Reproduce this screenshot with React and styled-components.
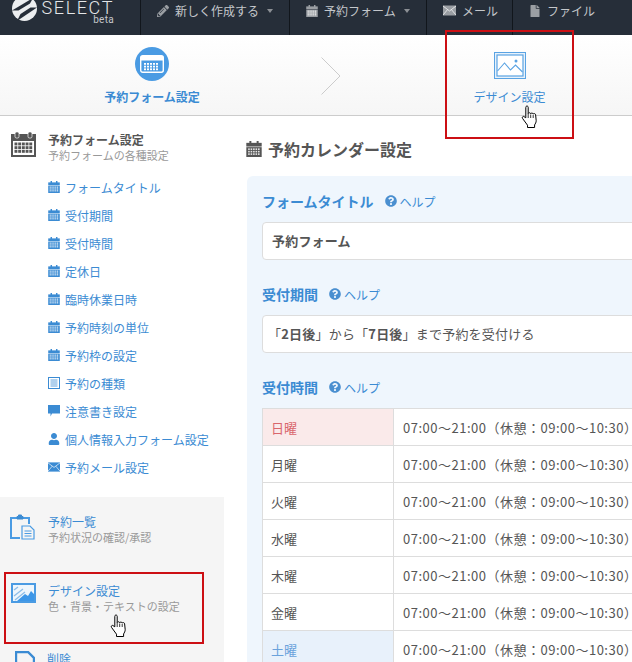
import React from "react";
import styled, {createGlobalStyle} from "styled-components";
import {FaPencilAlt, FaFile, FaUser, FaQuestionCircle} from "react-icons/fa";

const BLUE = "#3b8bd3";
const RED = "#cc0f14";
const FONT = '"Noto Sans CJK JP", "Liberation Sans", sans-serif';

const GlobalStyle = createGlobalStyle`
  html, body { margin: 0; padding: 0; background: #fff; }
  body { font-family: ${FONT}; font-size: 12px; }
  * { box-sizing: border-box; }
`;

const Page = styled.div`
  position: relative;
  width: 632px;
  height: 662px;
  overflow: hidden;
  background: #fff;
`;

const NavBar = styled.div`
  display: flex;
  height: 35px;
  background: #262e39;
  color: #c4c7cb;
`;

const Logo = styled.div`
  width: 140px;
  flex: none;
  display: flex;
  gap: 6px;
  padding-left: 12px;
  overflow: hidden;
`;

const LogoText = styled.div`
  width: 71px;
  display: flex;
  flex-direction: column;
  align-items: flex-end;
  font-family: Roboto, "Liberation Sans", sans-serif;
  font-size: 18px;
  font-weight: 300;
  letter-spacing: 1.6px;
  line-height: 16px;
  color: #e4e6e8;
  small {
    font-size: 10px;
    font-weight: 400;
    letter-spacing: 0.3px;
    line-height: 7px;
    color: #c4c7cb;
  }
`;

const NavItem = styled.div`
  width: ${p => p.$width}px;
  flex: none;
  display: flex;
  align-items: center;
  gap: 6px;
  padding: 0 0 14px 16px;
  border-left: 1px solid #11161c;
  font-size: 12px;
  svg { flex: none; color: #9a9ea3; }
`;

const Caret = styled.span`
  width: 0;
  height: 0;
  margin-left: 2px;
  border: 3.5px solid transparent;
  border-top: 4px solid #8c9095;
  border-bottom: 0;
`;

const StepBar = styled.div`
  display: grid;
  grid-template-columns: 304px 54px 303px;
  height: 81px;
  background: linear-gradient(#fff, #f6f6f6);
  border-bottom: 1px solid #ccc;
`;

const Step = styled.div`
  display: flex;
  flex-direction: column;
  align-items: center;
  padding-top: ${p => p.$top}px;
  color: ${BLUE};
  font-size: 12px;
  font-weight: ${p => (p.$bold ? 700 : 400)};
`;

const StepLabel = styled.div`
  position: absolute;
  top: 88px;
  line-height: 18px;
  white-space: nowrap;
`;

const StepArrow = styled.div`
  display: flex;
  align-items: flex-start;
  justify-content: center;
  padding-top: 22px;
`;

const Circle = styled.div`
  width: 34px;
  height: 34px;
  border-radius: 50%;
  background: #4a9be3;
  display: flex;
  align-items: center;
  justify-content: center;
`;

const Body = styled.div`
  display: flex;
`;

const Side = styled.div`
  width: 224px;
  flex: none;
`;

const SideTop = styled.div`
  height: 381px;
  padding-top: 16px;
`;

const SideHead = styled.div`
  display: flex;
  align-items: flex-start;
  gap: ${p => p.$gap || 12}px;
  padding-left: ${p => p.$left || 11}px;
  height: ${p => p.$height || "auto"};
`;

const SideTitle = styled.div`
  font-size: 12px;
  line-height: 16px;
  font-weight: ${p => (p.$blue ? 400 : 700)};
  color: ${p => (p.$blue ? BLUE : "#555")};
`;

const SideSub = styled.div`
  font-size: 11px;
  line-height: 15px;
  color: #999;
  white-space: nowrap;
`;

const Menu = styled.ul`
  list-style: none;
  margin: 10px 0 0;
  padding: 0 0 0 48px;
`;

const MenuItem = styled.li`
  display: flex;
  align-items: center;
  gap: 5px;
  height: 28px;
  color: ${BLUE};
  font-size: 12px;
  white-space: nowrap;
  svg { flex: none; width: 12px; height: 12px; }
`;

const SidePanel = styled.div`
  height: 165px;
  padding-top: 17px;
  background: #f5f5f5;
`;

const Main = styled.div`
  flex: 1;
  min-width: 0;
  padding: 21px 0 0 22px;
`;

const PageTitle = styled.h2`
  display: flex;
  align-items: center;
  gap: 6px;
  margin: 0 0 15px;
  height: 24px;
  font-size: 16px;
  font-weight: 700;
  color: #555;
  white-space: nowrap;
`;

const Panel = styled.div`
  width: 500px;
  margin-left: 1px;
  padding: 14px 15px 0;
  border-radius: 6px 0 0 0;
  background: #eff6fd;
`;

const FieldLabel = styled.div`
  display: flex;
  align-items: center;
  height: 22px;
  margin-bottom: 10px;
  font-size: 14px;
  font-weight: 700;
  color: ${BLUE};
  white-space: nowrap;
`;

const Help = styled.span`
  display: inline-flex;
  align-items: center;
  gap: 3px;
  margin-left: 11px;
  font-size: 12px;
  font-weight: 400;
  color: ${BLUE};
  svg { color: #4a8fd0; }
`;

const TextBox = styled.div`
  display: flex;
  align-items: center;
  height: 38px;
  margin-bottom: 23px;
  padding: 0 0 1px ${p => p.$pad}px;
  background: #fff;
  border: 1px solid #ddd;
  border-radius: 4px;
  font-size: 13px;
  letter-spacing: 0.2px;
  font-weight: ${p => (p.$bold ? 700 : 400)};
  color: #555;
  white-space: pre;
`;

const Table = styled.table`
  width: 100%;
  border-collapse: collapse;
  background: #fff;
  font-size: 13px;
  color: #555;
`;

const DayCell = styled.td`
  width: 131px;
  height: 37px;
  padding: 0 0 0 8px;
  border: 1px solid #ddd;
  color: ${p => (p.$day === "sun" ? "#d9666d" : p.$day === "sat" ? "#6aa2dc" : "#555")};
  background: ${p => (p.$day === "sun" ? "#faeaea" : p.$day === "sat" ? "#e8f1fb" : "#fff")};
`;

const TimeCell = styled.td`
  height: 37px;
  padding: 0 0 0 9px;
  border: 1px solid #ddd;
  letter-spacing: 0.5px;
  white-space: nowrap;
`;

const RedBox = styled.div`
  position: absolute;
  left: ${p => p.$left}px;
  top: ${p => p.$top}px;
  width: ${p => p.$width}px;
  height: ${p => p.$height}px;
  border: 2px solid ${RED};
  pointer-events: none;
`;

const CursorSpot = styled.div`
  position: absolute;
  left: ${p => p.$left}px;
  top: ${p => p.$top}px;
  line-height: 0;
`;

function CalendarIcon({size = 12, color = "currentColor"}) {
  const cells = [];
  for (let y = 0; y < 3; y++) {
    for (let x = 0; x < 5; x++) {
      cells.push(<rect key={`${x}-${y}`} x={1.5 + x * 2} y={6 + y * 2} width="1.3" height="1.3" fill="#fff" opacity="0.85" />);
    }
  }
  return (
    <svg width={size} height={size} viewBox="0 0 12.5 13" fill={color}>
      <rect x="2.5" y="0" width="1.6" height="2.5" />
      <rect x="8.4" y="0" width="1.6" height="2.5" />
      <rect x="0" y="1.5" width="12.5" height="3" />
      <rect x="0" y="5" width="12.5" height="8" />
      {cells}
    </svg>
  );
}

function BigCalendar() {
  const cells = [];
  for (let y = 0; y < 3; y++) {
    for (let x = 0; x < 5; x++) {
      cells.push(<rect key={`${x}-${y}`} x={3.5 + x * 3.7} y={10.5 + y * 3.7} width="2.9" height="2.9" fill="#555" />);
    }
  }
  return (
    <svg width="25" height="25" viewBox="0 0 25 25">
      <rect x="0" y="2" width="25" height="23" fill="#555" />
      <rect x="2" y="9" width="21" height="14" fill="#fff" />
      <rect x="4" y="0" width="4" height="6" rx="1.5" fill="#555" stroke="#fff" strokeWidth="0.7" />
      <rect x="17" y="0" width="4" height="6" rx="1.5" fill="#555" stroke="#fff" strokeWidth="0.7" />
      {cells}
    </svg>
  );
}

function CircleCalendar() {
  const cells = [];
  for (let y = 0; y < 3; y++) {
    for (let x = 0; x < 5; x++) {
      cells.push(<rect key={`${x}-${y}`} x={4 + x * 3} y={8 + y * 2.7} width="2" height="1.8" fill="#fff" />);
    }
  }
  return (
    <svg width="24" height="18" viewBox="0 0 24 18">
      <rect x="0.7" y="0.7" width="22.6" height="16.6" rx="2" fill="#4a9be3" stroke="#fff" strokeWidth="1.4" />
      <rect x="1" y="1" width="22" height="4.5" fill="#fff" />
      {cells}
    </svg>
  );
}

function ListIcon() {
  return (
    <svg viewBox="0 0 12 12" fill="none" stroke={BLUE}>
      <rect x="0.5" y="0.5" width="11" height="11" />
      <path d="M2.5 3h7M2.5 5h7M2.5 7h7M2.5 9h7" strokeWidth="0.8" />
    </svg>
  );
}

function CommentIcon() {
  return (
    <svg viewBox="0 0 12 12" fill={BLUE}>
      <path d="M0 0h12v8.5H4L2.5 11.5V8.5H0z" />
    </svg>
  );
}

function MailIcon({color = BLUE, size = 12}) {
  return (
    <svg viewBox="0 0 13 10" width={size} height={size} style={{color}}>
      <rect width="13" height="10" fill={color} />
      <path d="M0 0.5l6.5 5 6.5-5M0 9.5l4.6-5.4M13 9.5L8.4 4.1" fill="none" stroke="#fff" strokeWidth="0.9" opacity="0.8" />
    </svg>
  );
}

function ClipboardIcon() {
  return (
    <svg width="25" height="27" viewBox="0 0 25 27" fill="none" stroke="#4a9be3" strokeWidth="2">
      <path d="M10 24H1V4h18v6" />
      <path d="M7 5V2.5h1.5V1h3v1.5H13V5z" fill={BLUE} stroke={BLUE} strokeWidth="1" />
      <path d="M12 12h8l4 4v9H12z" fill="#f5f5f5" strokeWidth="1.2" />
      <path d="M14.5 17h7M14.5 19.5h7M14.5 22h7" strokeWidth="1" />
    </svg>
  );
}

function ImageFilled() {
  return (
    <svg width="25" height="20" viewBox="0 0 25 20">
      <rect width="25" height="20" fill="#4a9be3" />
      <rect x="2" y="2" width="21" height="16" fill="#eef6fc" />
      <path d="M6 18l8-7 3 2 3-5 3 3v7z" fill="#3d97e8" />
      <path d="M3 7l4-3M3 13L12 6M4 17L14 9" stroke="#8dbde8" strokeWidth="1.3" />
    </svg>
  );
}

function ImageOutline() {
  return (
    <svg width="32" height="27" viewBox="0 0 32 27" fill="none" stroke="#5aa3e3">
      <rect x="0.5" y="0.5" width="31" height="26" fill="#e8f2fb" />
      <rect x="3" y="3" width="26" height="21" fill="#fff" strokeWidth="1.2" />
      <path d="M3.5 19l7-8 6 7 5-5 7 7" strokeWidth="1.1" />
      <circle cx="22" cy="9" r="1.5" fill="#5aa3e3" stroke="none" />
    </svg>
  );
}

function PageIcon() {
  return (
    <svg width="20" height="24" viewBox="0 0 20 24" fill="#f5f5f5" stroke={BLUE} strokeWidth="2.4">
      <path d="M1 1h12l6 6v16H1z" />
    </svg>
  );
}

function HandCursor() {
  return (
    <svg width="18" height="24" viewBox="0 0 18 24">
      <path
        d="M5 1.5c.9-.9 2.2-.4 2.2.8v6.2c.3-1 2.3-1 2.5.2.3-.9 2.2-.9 2.5.3.5-.8 2.2-.5 2.4.7l.6 6c0 1.5-.8 3-1.6 4.2v2.6H6.5v-2.3L1.6 13.5c-.8-1-.1-2.3 1.1-2.1l2.1 1.4V2.5z"
        fill="#fff"
        stroke="#000"
        strokeWidth="1"
        strokeLinejoin="round"
      />
      <path d="M7.2 8.5v4.5M9.7 9.5v3.5M12.2 9.8v3.2" stroke="#000" strokeWidth="0.8" fill="none" />
    </svg>
  );
}

function LogoMark() {
  return (
    <svg width="25" height="21" viewBox="0 0 25 21" style={{flex: "none"}}>
      <circle cx="12.5" cy="8.5" r="12.5" fill="#eceef0" />
      <path d="M0 10.5L21 -2 18 3.5 6.5 10.5z" fill="#262e39" />
      <path d="M25 7.5L5 21 8.5 14 18.5 7.5z" fill="#262e39" />
    </svg>
  );
}

const CALENDAR = <CalendarIcon />;
const MENU = [
  ["フォームタイトル", CALENDAR],
  ["受付期間", CALENDAR],
  ["受付時間", CALENDAR],
  ["定休日", CALENDAR],
  ["臨時休業日時", CALENDAR],
  ["予約時刻の単位", CALENDAR],
  ["予約枠の設定", CALENDAR],
  ["予約の種類", <ListIcon />],
  ["注意書き設定", <CommentIcon />],
  ["個人情報入力フォーム設定", <FaUser />],
  ["予約メール設定", <MailIcon />],
];

const DAYS = [
  ["日曜", "sun"],
  ["月曜"],
  ["火曜"],
  ["水曜"],
  ["木曜"],
  ["金曜"],
  ["土曜", "sat"],
];

function HelpLink() {
  return (
    <Help>
      <FaQuestionCircle size={12} />
      ヘルプ
    </Help>
  );
}

export default function App() {
  return (
    <Page>
      <GlobalStyle />
      <NavBar>
        <Logo>
          <LogoMark />
          <LogoText>
            SELECT
            <small>beta</small>
          </LogoText>
        </Logo>
        <NavItem $width={149}>
          <FaPencilAlt size={12} />
          新しく作成する
          <Caret />
        </NavItem>
        <NavItem $width={137}>
          <CalendarIcon color="#9a9ea3" />
          予約フォーム
          <Caret />
        </NavItem>
        <NavItem $width={86}>
          <MailIcon color="#9a9ea3" size={13} />
          メール
        </NavItem>
        <NavItem $width={120}>
          <FaFile size={12} />
          ファイル
        </NavItem>
      </NavBar>

      <StepBar>
        <Step $top={12} $bold>
          <Circle>
            <CircleCalendar />
          </Circle>
          <StepLabel>予約フォーム設定</StepLabel>
        </Step>
        <StepArrow>
          <svg width="20" height="38" viewBox="0 0 20 38" fill="none" stroke="#ccc">
            <path d="M0.5 0.5L19 19 0.5 37.5" />
          </svg>
        </StepArrow>
        <Step $top={17}>
          <ImageOutline />
          <StepLabel>デザイン設定</StepLabel>
        </Step>
      </StepBar>

      <Body>
        <Side>
          <SideTop>
            <SideHead>
              <BigCalendar />
              <div>
                <SideTitle>予約フォーム設定</SideTitle>
                <SideSub>予約フォームの各種設定</SideSub>
              </div>
            </SideHead>
            <Menu>
              {MENU.map(([label, icon]) => (
                <MenuItem key={label}>
                  {icon}
                  {label}
                </MenuItem>
              ))}
            </Menu>
          </SideTop>
          <SidePanel>
            <SideHead $height="69px" $left={10} $gap={13}>
              <ClipboardIcon />
              <div>
                <SideTitle $blue>予約一覧</SideTitle>
                <SideSub>予約状況の確認/承認</SideSub>
              </div>
            </SideHead>
            <SideHead $height="68px">
              <ImageFilled />
              <div>
                <SideTitle $blue>デザイン設定</SideTitle>
                <SideSub>色・背景・テキストの設定</SideSub>
              </div>
            </SideHead>
            <SideHead $left={15}>
              <PageIcon />
              <div>
                <SideTitle $blue>削除</SideTitle>
              </div>
            </SideHead>
          </SidePanel>
        </Side>

        <Main>
          <PageTitle>
            <CalendarIcon size={16} color="#555" />
            予約カレンダー設定
          </PageTitle>
          <Panel>
            <FieldLabel>
              フォームタイトル
              <HelpLink />
            </FieldLabel>
            <TextBox $bold $pad={9}>予約フォーム</TextBox>
            <FieldLabel>
              受付期間
              <HelpLink />
            </FieldLabel>
            <TextBox $pad={5}>「<b>2日後</b>」から「<b>7日後</b>」まで予約を受付ける</TextBox>
            <FieldLabel>
              受付時間
              <HelpLink />
            </FieldLabel>
            <Table>
              <tbody>
                {DAYS.map(([day, kind]) => (
                  <tr key={day}>
                    <DayCell $day={kind}>{day}</DayCell>
                    <TimeCell>07:00～21:00（休憩：09:00～10:30）</TimeCell>
                  </tr>
                ))}
              </tbody>
            </Table>
          </Panel>
        </Main>
      </Body>

      <RedBox $left={445} $top={30} $width={129} $height={109} />
      <RedBox $left={4} $top={572} $width={200} $height={72} />
      <CursorSpot $left={521} $top={105}>
        <HandCursor />
      </CursorSpot>
      <CursorSpot $left={110} $top={614}>
        <HandCursor />
      </CursorSpot>
    </Page>
  );
}
